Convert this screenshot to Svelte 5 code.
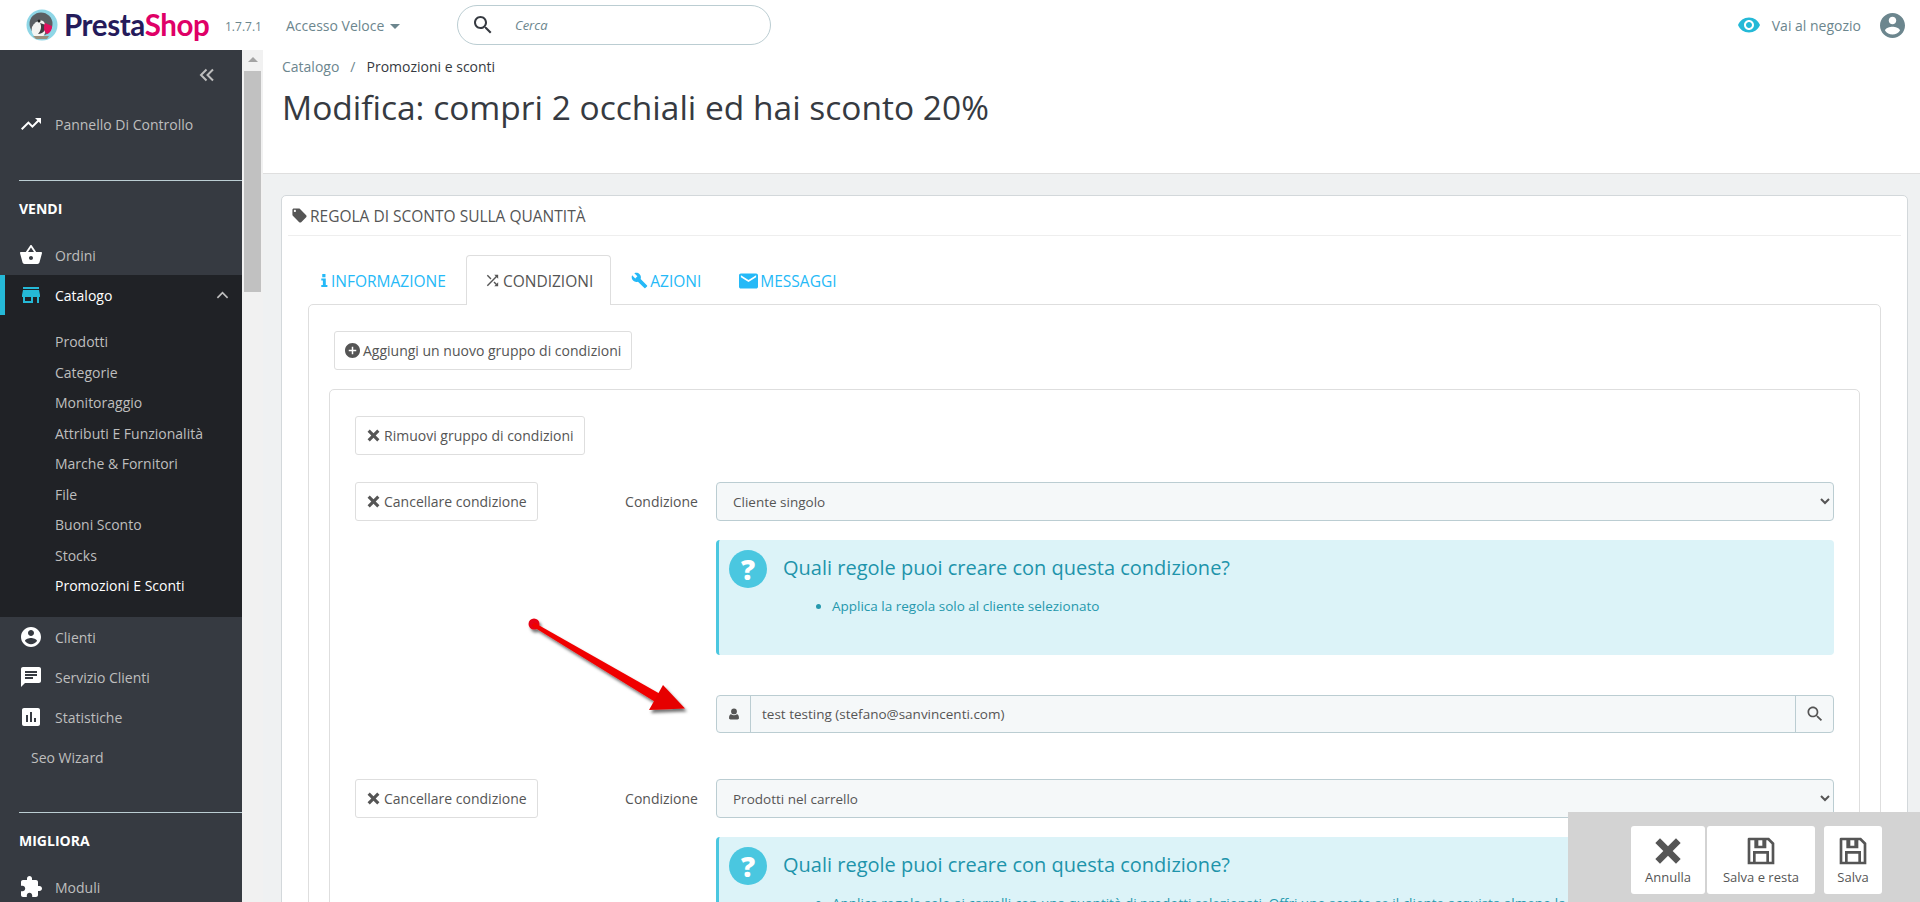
<script>
  const P = {
    trend: "M16 6l2.29 2.29-4.88 4.88-4-4L2 16.59 3.41 18l6-6 4 4 6.3-6.29L22 12V6z",
    basket: "M17.21 9l-4.38-6.56c-.19-.28-.51-.42-.83-.42-.32 0-.64.14-.83.43L6.79 9H2c-.55 0-1 .45-1 1 0 .09.01.18.04.27l2.54 9.27c.23.84 1 1.46 1.92 1.46h13c.92 0 1.69-.62 1.93-1.46l2.54-9.27L23 10c0-.55-.45-1-1-1h-4.79zM9 9l3-4.4L15 9H9zm3 8c-1.1 0-2-.9-2-2s.9-2 2-2 2 .9 2 2-.9 2-2 2z",
    store: "M20 4H4v2h16V4zm1 10v-2l-1-5H4l-1 5v2h1v6h10v-6h4v6h2v-6h1zm-9 4H6v-4h6v4z",
    account: "M12 2C6.48 2 2 6.48 2 12s4.48 10 10 10 10-4.48 10-10S17.52 2 12 2zm0 3c1.66 0 3 1.34 3 3s-1.34 3-3 3-3-1.34-3-3 1.34-3 3-3zm0 14.2c-2.5 0-4.71-1.28-6-3.22.03-1.99 4-3.08 6-3.08 1.99 0 5.97 1.09 6 3.08-1.29 1.94-3.5 3.22-6 3.22z",
    chat: "M20 2H4c-1.1 0-1.99.9-1.99 2L2 22l4-4h14c1.1 0 2-.9 2-2V4c0-1.1-.9-2-2-2zM6 9h12v2H6V9zm8 5H6v-2h8v2zm4-6H6V6h12v2z",
    stats: "M19 3H5c-1.1 0-2 .9-2 2v14c0 1.1.9 2 2 2h14c1.1 0 2-.9 2-2V5c0-1.1-.9-2-2-2zM9 17H7v-7h2v7zm4 0h-2V7h2v10zm4 0h-2v-4h2v4z",
    puzzle: "M20.5 11H19V7c0-1.1-.9-2-2-2h-4V3.5C13 2.12 11.88 1 10.5 1S8 2.12 8 3.5V5H4c-1.1 0-1.99.9-1.99 2v3.8H3.5c1.49 0 2.7 1.21 2.7 2.7s-1.21 2.7-2.7 2.7H2V20c0 1.1.9 2 2 2h3.8v-1.5c0-1.49 1.21-2.7 2.7-2.7 1.49 0 2.7 1.21 2.7 2.7V22H17c1.1 0 2-.9 2-2v-4h1.5c1.38 0 2.5-1.12 2.5-2.5S21.88 11 20.5 11z",
    eye: "M12 4.5C7 4.5 2.73 7.61 1 12c1.73 4.39 6 7.5 11 7.5s9.27-3.11 11-7.5c-1.73-4.39-6-7.5-11-7.5zM12 17c-2.76 0-5-2.24-5-5s2.24-5 5-5 5 2.24 5 5-2.24 5-5 5zm0-8c-1.66 0-3 1.34-3 3s1.34 3 3 3 3-1.34 3-3-1.34-3-3-3z",
    search: "M15.5 14h-.79l-.28-.27C15.41 12.59 16 11.11 16 9.5 16 5.91 13.09 3 9.5 3S3 5.91 3 9.5 5.91 16 9.5 16c1.61 0 3.09-.59 4.23-1.57l.27.28v.79l5 4.99L20.49 19l-4.99-5zm-6 0C7.01 14 5 11.99 5 9.5S7.01 5 9.5 5 14 7.01 14 9.5 11.99 14 9.5 14z",
    tag: "M21.41 11.58l-9-9C12.05 2.22 11.55 2 11 2H4c-1.1 0-2 .9-2 2v7c0 .55.22 1.05.59 1.42l9 9c.36.36.86.58 1.41.58.55 0 1.05-.22 1.41-.59l7-7c.37-.36.59-.86.59-1.41 0-.55-.23-1.06-.59-1.42zM5.5 7C4.67 7 4 6.33 4 5.5S4.67 4 5.5 4 7 4.67 7 5.5 6.33 7 5.5 7z",
    shuffle: "M10.59 9.17L5.41 4 4 5.41l5.17 5.17 1.42-1.41zM14.5 4l2.04 2.04L4 18.59 5.41 20 17.96 7.46 20 9.5V4h-5.5zm.33 9.41l-1.41 1.41 3.13 3.13L14.5 20H20v-5.5l-2.04 2.04-3.13-3.13z",
    wrench: "M22.7 19l-9.1-9.1c.9-2.3.4-5-1.5-6.9-2-2-5-2.4-7.4-1.3L9 6 6 9 1.6 4.7C.4 7.1.9 10.1 2.9 12.1c1.9 1.9 4.6 2.4 6.9 1.5l9.1 9.1c.4.4 1 .4 1.4 0l2.3-2.3c.5-.4.5-1.1.1-1.4z",
    mail: "M20 4H4c-1.1 0-1.99.9-1.99 2L2 18c0 1.1.9 2 2 2h16c1.1 0 2-.9 2-2V6c0-1.1-.9-2-2-2zm0 4l-8 5-8-5V6l8 5 8-5v2z",
    plus: "M12 2C6.48 2 2 6.48 2 12s4.48 10 10 10 10-4.48 10-10S17.52 2 12 2zm5 11h-4v4h-2v-4H7v-2h4V7h2v4h4v2z",
    times: "M6 2.5L12 8.5l6-6 3.5 3.5-6 6 6 6-3.5 3.5-6-6-6 6L2.500 18l6-6-6-6z",
    info: "M8 9h7v10h2.500v3h-9.500v-3h2.500v-7h-2.500zM9.500 2h5v5h-5z",
    user: "M12 2.500a5 5 0 1 1 0 10a5 5 0 1 1 0-10zM7 12.500c1.300 1.200 3 1.800 5 1.800s3.700-.6 5-1.800c2.400.3 3.500 2.700 3.500 6.500 0 1.700-1 2.500-2.500 2.500H6c-1.500 0-2.500-.8-2.500-2.500 0-3.800 1.100-6.200 3.500-6.500z",
    save: "M3 2h15l4 4v16H2V3a1 1 0 0 1 1-1zM4 4v16h2v-8h12v8h2V7l-3-3h-1v6H7V4zm6 0v4h3V4zM8 14v6h8v-6z"
  };

  const catalog = ["Prodotti", "Categorie", "Monitoraggio", "Attributi E Funzionalità", "Marche & Fornitori", "File", "Buoni Sconto", "Stocks"];
</script>

<div class="page">
  <header class="topbar">
    <div class="logo">
      <svg class="puffin" viewBox="0 0 32 32">
        <circle cx="16" cy="16" r="15.500" fill="#8ed6e6" />
        <circle cx="15" cy="15" r="11.500" fill="#5b5f63" />
        <path d="M6 18c3-6 9-8 12-5 3 4 2 11-1 15H9c-3-3-4-6-3-10z" fill="#f4f4f2" />
        <path d="M14 14c2 3 1 8-2 11 5 0 8-4 8-9z" fill="#3d3f44" />
        <path d="M19 14l7 3c0 4-2 7-5 8-3-2-4-7-2-11z" fill="#e0115f" />
        <circle cx="13" cy="12" r="1.500" fill="#222" />
        <path d="M7 27h16l-2 3H10z" fill="#9a8f7b" />
      </svg>
      <span class="brand"><b>Presta</b><i>Shop</i></span>
    </div>
    <span class="version">1.7.7.1</span>
    <span class="quick">Accesso Veloce<span class="caret"></span></span>
    <div class="search">
      <svg viewBox="0 0 24 24"><path d={P.search} /></svg>
      <em>Cerca</em>
    </div>
    <div class="right">
      <svg class="eye" viewBox="0 0 24 24"><path d={P.eye} /></svg>
      <span>Vai al negozio</span>
      <svg class="avatar" viewBox="2 2 20 20"><path d={P.account} /></svg>
    </div>
  </header>

  <div class="body">
    <nav class="sidebar">
      <div class="collapse">
        <svg viewBox="0 0 16 14"><path d="M7.500 1.500L2 7l5.500 5.500M14 1.500L8.500 7l5.500 5.500" /></svg>
      </div>
      <a class="item first" href="#a"><svg viewBox="0 0 24 24"><path d={P.trend} /></svg>Pannello Di Controllo</a>
      <hr />
      <h4>VENDI</h4>
      <a class="item" href="#a"><svg viewBox="0 0 24 24"><path d={P.basket} /></svg>Ordini</a>
      <div class="open">
        <a class="item active" href="#a">
          <svg viewBox="0 0 24 24"><path d={P.store} /></svg>Catalogo
          <svg class="chev" viewBox="0 0 14 8"><path d="M1.500 7L7 1.500 12.500 7" /></svg>
        </a>
        <ul>
          {#each catalog as c}
            <li>{c}</li>
          {/each}
          <li class="cur">Promozioni E Sconti</li>
        </ul>
      </div>
      <a class="item" href="#a"><svg viewBox="0 0 24 24"><path d={P.account} /></svg>Clienti</a>
      <a class="item" href="#a"><svg viewBox="0 0 24 24"><path d={P.chat} /></svg>Servizio Clienti</a>
      <a class="item" href="#a"><svg viewBox="0 0 24 24"><path d={P.stats} /></svg>Statistiche</a>
      <a class="item plain" href="#a">Seo Wizard</a>
      <hr class="second" />
      <h4>MIGLIORA</h4>
      <a class="item" href="#a"><svg viewBox="0 0 24 24"><path d={P.puzzle} /></svg>Moduli</a>
    </nav>

    <div class="scroll">
      <span class="up"></span>
      <span class="thumb"></span>
    </div>

    <main>
      <div class="head">
        <div class="crumbs"><span>Catalogo</span><span class="sep">/</span><span class="now">Promozioni e sconti</span></div>
        <h1>Modifica: compri 2 occhiali ed hai sconto 20%</h1>
      </div>

      <section class="panel">
        <h3><svg viewBox="0 0 24 24"><path d={P.tag} /></svg>REGOLA DI SCONTO SULLA QUANTITÀ</h3>

        <div class="tabs">
          <span class="tab"><svg class="ic-i" viewBox="6 1 14 22"><path d={P.info} /></svg>INFORMAZIONE</span>
          <span class="tab on"><svg viewBox="0 0 24 24"><path d={P.shuffle} /></svg>CONDIZIONI</span>
          <span class="tab"><svg viewBox="0 0 24 24"><path d={P.wrench} /></svg>AZIONI</span>
          <span class="tab"><svg viewBox="2 4 20 16" class="ic-m"><path d={P.mail} /></svg>MESSAGGI</span>
        </div>

        <div class="tabbody">
          <button class="btn"><svg viewBox="2 2 20 20"><path d={P.plus} /></svg>Aggiungi un nuovo gruppo di condizioni</button>

          <div class="well">
            <button class="btn"><svg viewBox="0 0 24 24"><path d={P.times} /></svg>Rimuovi gruppo di condizioni</button>

            <div class="cond">
              <button class="btn"><svg viewBox="0 0 24 24"><path d={P.times} /></svg>Cancellare condizione</button>
              <label for="c1">Condizione</label>
              <div class="ctl">
                <select id="c1"><option>Cliente singolo</option></select>
                <div class="alert">
                  <div class="q">?</div>
                  <div>
                    <h5>Quali regole puoi creare con questa condizione?</h5>
                    <ul><li>Applica la regola solo al cliente selezionato</li></ul>
                  </div>
                </div>
                <div class="picker">
                  <span class="add"><svg viewBox="0 0 24 24"><path d={P.user} /></svg></span>
                  <span class="val">test testing (stefano@sanvincenti.com)</span>
                  <span class="add end"><svg viewBox="0 0 24 24"><path d={P.search} /></svg></span>
                </div>
              </div>
            </div>

            <div class="cond">
              <button class="btn"><svg viewBox="0 0 24 24"><path d={P.times} /></svg>Cancellare condizione</button>
              <label for="c2">Condizione</label>
              <div class="ctl">
                <select id="c2"><option>Prodotti nel carrello</option></select>
                <div class="alert">
                  <div class="q">?</div>
                  <div>
                    <h5>Quali regole puoi creare con questa condizione?</h5>
                    <ul><li>Applica regola solo ai carrelli con una quantità di prodotti selezionati. Offri uno sconto se il cliente acquista almeno la quantità minima di prodotti indicata nella condizione del carrello del cliente.</li></ul>
                  </div>
                </div>
              </div>
            </div>
          </div>
        </div>
      </section>
    </main>
  </div>

  <svg class="arrow" viewBox="0 0 180 110" width="180" height="110">
    <defs>
      <filter id="sh" x="-20%" y="-20%" width="140%" height="140%">
        <feDropShadow dx="2" dy="3" stdDeviation="1.500" flood-color="#000" flood-opacity="0.55" />
      </filter>
    </defs>
    <g filter="url(#sh)">
      <circle cx="12" cy="11" r="5.500" fill="#e60012" />
      <path d="M12 9.500L140 82l-5 8 L10 13z" fill="#f00000" />
      <path d="M163 95.500L127 97l14-25z" fill="#e60000" />
    </g>
  </svg>

  <div class="footbar">
    <button class="fbtn annulla"><svg viewBox="0 0 24 24"><path d={P.times} /></svg>Annulla</button>
    <button class="fbtn stay"><svg viewBox="0 0 24 24"><path d={P.save} /></svg>Salva e resta</button>
    <button class="fbtn save"><svg viewBox="0 0 24 24"><path d={P.save} /></svg>Salva</button>
  </div>
</div>

<style>
  :global(body) {
    margin: 0;
    background: #eff1f2;
    overflow: hidden;
  }
  .page {
    position: relative;
    height: 902px;
    overflow: hidden;
    font-family: "Open Sans", sans-serif;
    font-size: 14px;
    color: #363a41;
  }
  svg {
    fill: currentColor;
    flex: none;
  }

  /* header */
  .topbar {
    height: 50px;
    background: #fff;
    display: flex;
    align-items: center;
  }
  .logo {
    display: flex;
    align-items: center;
    margin-left: 26px;
    width: 199px;
  }
  .puffin {
    width: 32px;
    height: 32px;
  }
  .brand {
    margin-left: 6px;
    font-family: "Lato", sans-serif;
    font-size: 29.500px;
    letter-spacing: -0.4px;
    line-height: 32px;
  }
  .brand b {
    font-weight: 700;
    color: #251b5b;
  }
  .brand i {
    font-style: normal;
    font-weight: 700;
    color: #df0067;
  }
  .version {
    font-size: 12px;
    color: #6c868e;
    width: 61px;
    margin-top: 3px;
  }
  .quick {
    color: #6c868e;
    width: 171px;
    font-size: 14px;
  }
  .caret {
    display: inline-block;
    margin-left: 6px;
    vertical-align: 2px;
    border: 5px solid transparent;
    border-top-color: #6c868e;
    border-bottom: 0;
  }
  .search {
    width: 312px;
    height: 38px;
    border: 1px solid #bbcdd2;
    border-radius: 20px;
    display: flex;
    align-items: center;
    color: #6c868e;
    box-sizing: content-box;
  }
  .search svg {
    width: 24px;
    height: 24px;
    margin-left: 13px;
    color: #363a41;
  }
  .search em {
    margin-left: 20px;
    font-size: 13px;
  }
  .right {
    margin-left: auto;
    display: flex;
    align-items: center;
    color: #6c868e;
    padding-right: 15px;
  }
  .eye {
    width: 24px;
    height: 24px;
    color: #25b9d7;
    margin-right: 11px;
  }
  .avatar {
    width: 25px;
    height: 25px;
    margin-left: 19px;
  }

  .body {
    display: flex;
    height: 852px;
  }

  /* sidebar */
  .sidebar {
    width: 242px;
    flex: none;
    background: #363a41;
    color: #bebebe;
    overflow: hidden;
  }
  .collapse {
    height: 50px;
    display: flex;
    justify-content: flex-end;
    align-items: center;
    padding-right: 27px;
  }
  .collapse svg {
    width: 16px;
    height: 14px;
    fill: none;
    stroke: #bebebe;
    stroke-width: 2;
  }
  .item {
    display: flex;
    align-items: center;
    height: 40px;
    color: #bebebe;
    text-decoration: none;
    padding-left: 19px;
    position: relative;
  }
  .item svg {
    width: 24px;
    height: 24px;
    color: #fff;
    margin-right: 12px;
  }
  .item.first {
    margin-top: 4px;
  }
  .item.plain {
    padding-left: 31px;
  }
  .sidebar hr {
    margin: 36px 0 0 19px;
    border: 0;
    border-top: 1px solid #bbcdd2;
  }
  .sidebar hr.second {
    margin-top: 35px;
  }
  .sidebar h4 {
    margin: 0;
    height: 54px;
    line-height: 56px;
    padding-left: 19px;
    font-size: 14px;
    font-weight: 700;
    color: #fff;
  }
  .open {
    background: #202226;
    height: 342px;
  }
  .item.active {
    color: #fff;
    padding-left: 14px;
    border-left: 5px solid #25b9d7;
  }
  .item.active svg {
    color: #25b9d7;
  }
  .item.active .chev {
    width: 13px;
    height: 8px;
    position: absolute;
    right: 13px;
    margin: 0;
    fill: none;
    stroke: #bebebe;
    stroke-width: 1.800;
  }
  .open ul {
    list-style: none;
    margin: 0;
    padding: 12px 0 0 55px;
  }
  .open li {
    height: 30.500px;
    line-height: 30.500px;
  }
  .open li.cur {
    color: #fff;
  }

  .scroll {
    width: 21px;
    flex: none;
    background: #f1f1f1;
    position: relative;
    padding-top: 7px;
    box-sizing: border-box;
  }
  .up {
    display: block;
    width: 0;
    margin: 0 auto;
    border: 5px solid transparent;
    border-top: 0;
    border-bottom-color: #a3a3a3;
  }
  .thumb {
    display: block;
    width: 17px;
    height: 221px;
    margin: 9px 0 0 2px;
    background: #c1c1c1;
  }

  /* content */
  main {
    flex: 1;
    min-width: 0;
  }
  .head {
    height: 123px;
    background: #fff;
    border-bottom: 1px solid #dfdfdf;
    padding-left: 19px;
  }
  .crumbs {
    padding-top: 7px;
    line-height: 20px;
    font-size: 14px;
    color: #6c868e;
  }
  .crumbs .sep {
    margin: 0 11px;
  }
  .crumbs .now {
    color: #363a41;
  }
  h1 {
    margin: 7px 0 0;
    font-weight: 400;
    font-size: 33.500px;
    line-height: 46px;
    color: #363a41;
  }

  .panel {
    margin: 21px 12px 0 18px;
    background: #fff;
    border: 1px solid #d3d8db;
    border-radius: 5px;
    padding: 0 6px;
    height: 800px;
  }
  h3,
  .tab,
  h5 {
    font-family: "Liberation Sans Narrow", "Open Sans", sans-serif;
    font-weight: 400;
  }
  h3 {
    margin: 0;
    height: 39px;
    line-height: 40px;
    font-size: 15.500px;
    color: #555;
    display: flex;
    align-items: center;
    border-bottom: 1px solid #eee;
    padding-left: 3px;
  }
  h3 svg {
    width: 17px;
    height: 17px;
    margin-right: 2px;
  }
  .tabs {
    display: flex;
    margin-top: 19px;
    height: 50px;
    margin-bottom: -1px;
    position: relative;
    z-index: 1;
    padding-left: 14px;
  }
  .tab {
    display: flex;
    align-items: center;
    padding: 0 17px;
    margin-right: 2px;
    color: #25b9f7;
    font-size: 15.500px;
    border: 1px solid transparent;
    border-bottom: 0;
    box-sizing: border-box;
  }
  .tab svg {
    width: 17px;
    height: 17px;
    margin-right: 2px;
  }
  .tab .ic-i {
    width: 9px;
  }
  .tab .ic-m {
    width: 19px;
    height: 16px;
  }
  .tab.on {
    color: #555;
    background: #fff;
    border-color: #dedede;
    border-radius: 4px 4px 0 0;
  }
  .tabbody {
    margin-left: 20px;
    margin-right: 20px;
    border: 1px solid #dedede;
    border-radius: 5px;
    padding: 26px 20px 0 20px;
    height: 600px;
  }
  .btn {
    font: inherit;
    color: #555;
    background: #fff;
    border: 1px solid #dedede;
    border-radius: 3px;
    height: 39px;
    padding: 0 10px;
    display: inline-flex;
    align-items: center;
  }
  .tabbody > .btn {
    margin-left: 5px;
    padding: 0 10px;
  }
  .btn svg {
    width: 15px;
    height: 15px;
    margin-right: 3px;
  }
  .well {
    margin-top: 19px;
    border: 1px solid #dedede;
    border-radius: 5px;
    padding: 26px 25px 0;
    height: 600px;
  }
  .cond {
    display: grid;
    grid-template-columns: 249px 85px 1fr;
    column-gap: 9px;
    margin-top: 27px;
    align-items: start;
  }
  .cond .btn {
    justify-self: start;
  }
  label {
    line-height: 39px;
    font-size: 14px;
    color: #555;
    text-align: right;
    grid-column: 2;
    margin-left: -1px;
  }
  .ctl {
    margin-left: 9px;
  }
  select {
    display: block;
    width: 100%;
    height: 39px;
    font: inherit;
    font-size: 13.500px;
    color: #555;
    background: #f5f8f9;
    border: 1px solid #bbcdd2;
    border-radius: 4px;
    padding-left: 12px;
  }
  .alert {
    margin: 19px 0 40px;
    display: flex;
    background: #dcf3f8;
    border-left: 3px solid #4ac7e0;
    border-radius: 4px;
    height: 115px;
    color: #2598ad;
    box-sizing: border-box;
    padding: 10px 0 0 10px;
  }
  .q {
    width: 38px;
    height: 38px;
    border-radius: 50%;
    background: #4ac7e0;
    color: #fff;
    flex: none;
    text-align: center;
    font-size: 28px;
    font-weight: 800;
    line-height: 38px;
    margin-right: 16px;
  }
  h5 {
    margin: 6px 0 0;
    font-size: 20px;
    line-height: 24px;
    color: #1e94ab;
  }
  .alert ul {
    margin: 16px 0 0;
    padding-left: 49px;
    font-size: 13.500px;
    line-height: 20px;
  }
  .picker {
    display: flex;
    height: 38px;
    background: #f5f8f9;
    border: 1px solid #bbcdd2;
    border-radius: 4px;
    align-items: center;
    margin-bottom: 19px;
    font-size: 13.500px;
    color: #555;
    box-sizing: content-box;
    height: 36px;
  }
  .add {
    width: 33px;
    height: 100%;
    display: flex;
    align-items: center;
    justify-content: center;
    border-right: 1px solid #bbcdd2;
  }
  .add svg {
    width: 14px;
    height: 14px;
  }
  .add.end {
    border-right: 0;
    border-left: 1px solid #bbcdd2;
    width: 37px;
  }
  .add.end svg {
    width: 20px;
    height: 20px;
  }
  .val {
    flex: 1;
    padding-left: 11px;
  }

  /* overlays */
  .arrow {
    position: absolute;
    left: 522px;
    top: 613px;
  }
  .footbar {
    position: absolute;
    left: 1568px;
    top: 812px;
    width: 352px;
    height: 90px;
    background: #d3d3d3;
    display: flex;
    align-items: flex-start;
    padding: 14px 0 0 63px;
    box-sizing: border-box;
  }
  .fbtn {
    font: inherit;
    font-size: 13px;
    height: 68px;
    background: #fff;
    border: 0;
    border-radius: 3px;
    color: #555;
    padding: 0;
    display: flex;
    flex-direction: column;
    align-items: center;
    justify-content: center;
  }
  .fbtn svg {
    width: 32px;
    height: 32px;
    margin-bottom: 1px;
  }
  .annulla {
    width: 74px;
  }
  .stay {
    width: 108px;
    margin: 0 9px 0 2px;
  }
  .save {
    width: 58px;
  }
</style>
